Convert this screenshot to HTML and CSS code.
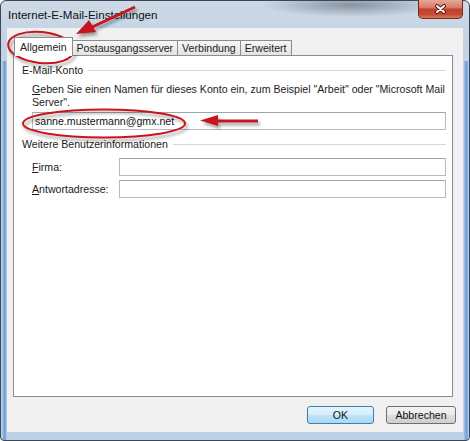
FILE: index.html
```html
<!DOCTYPE html>
<html lang="de">
<head>
    <meta charset="UTF-8">
    <meta name="viewport" content="width=device-width, initial-scale=1.0">
    <title>Internet-E-Mail-Einstellungen</title>
    <link rel="stylesheet" href="styles.css">
</head>
<body>
    <div class="window">
        <div class="titlebar">
            <span class="title">Internet-E-Mail-Einstellungen</span>
            <button class="close-btn" title="Schließen">
                <svg width="11" height="10" viewBox="0 0 11 10">
                    <path class="x-shade" d="M2 2 L9 8 M9 2 L2 8"/>
                    <path class="x-face" d="M2 2 L9 8 M9 2 L2 8"/>
                </svg>
            </button>
        </div>

        <div class="client">
            <div class="tabs">
                <div class="tab active">Allgemein</div>
                <div class="tab">Postausgangsserver</div>
                <div class="tab">Verbindung</div>
                <div class="tab">Erweitert</div>
            </div>

            <div class="panel">
                <div class="group-head">E-Mail-Konto</div>
                <p class="hint key">Geben Sie einen Namen für dieses Konto ein, zum Beispiel "Arbeit" oder "Microsoft Mail Server".</p>
                <input class="textbox account-name" type="text" value="sanne.mustermann@gmx.net">

                <div class="group-head group-gap">Weitere Benutzerinformationen</div>
                <div class="field first">
                    <label class="key">Firma:</label>
                    <input class="textbox" type="text">
                </div>
                <div class="field">
                    <label class="key">Antwortadresse:</label>
                    <input class="textbox" type="text">
                </div>
            </div>

            <div class="actions">
                <button class="btn btn-ok">OK</button>
                <button class="btn">Abbrechen</button>
            </div>
        </div>

        <!-- red markers drawn on top of the dialog -->
        <svg class="marks" width="470" height="441" viewBox="0 0 470 441">
            <g class="marks-ink">
                <ellipse cx="41" cy="47.5" rx="33" ry="15.5" transform="rotate(6 41 47.5)"/>
                <path d="M135 7 L90 28"/>
                <polygon points="76,34 96,32 89,20"/>
                <ellipse cx="104" cy="123.5" rx="81" ry="14"/>
                <path d="M258 121 L212 121"/>
                <polygon points="200,120.5 218,115 218,126"/>
            </g>
        </svg>
    </div>
</body>
</html>
```

FILE: styles.css
```css
* {
    box-sizing: border-box;
}

body {
    margin: 0;
    background: #fff;
    font-family: "Liberation Sans", Arial, sans-serif;
    font-size: 10.6px;
    color: #1b1b1b;
}

/* access key: first letter underlined */
.key::first-letter {
    text-decoration: underline;
}

/* window frame */
.window {
    position: relative;
    width: 470px;
    height: 441px;
    border: 1px solid #3d4855;
    border-radius: 6px 6px 4px 4px;
    padding: 0 6px 8px;
    display: flex;
    flex-direction: column;
    background:
        linear-gradient(to right, #c5d5e8 0, #9dbde4 2px, #6f9fd9 3px, #86addf 5px, #d2dfee 6px) left bottom / 6px calc(100% - 60px) no-repeat,
        linear-gradient(to left, #c5d5e8 0, #9dbde4 1px, #6f9fd9 2px, #86addf 4px, #d2dfee 6px) right bottom / 6px calc(100% - 60px) no-repeat,
        radial-gradient(ellipse 90px 12px at 350px 4px, rgba(70, 78, 92, 0.5), rgba(70, 78, 92, 0) 100%),
        linear-gradient(#cdd9e6, #c3d3e5 40px, #bcd0e6);
}

.titlebar {
    height: 27px;
    display: flex;
    justify-content: space-between;
    align-items: flex-start;
}

.title {
    padding: 7px 0 0 1px;
    font-size: 11.6px;
    line-height: 13px;
    color: #111;
}

.close-btn {
    width: 45px;
    height: 19px;
    margin-top: -1px;
    padding: 0;
    border: 1px solid #6e2a20;
    border-top: none;
    border-radius: 0 0 5px 5px;
    background: linear-gradient(#e7a797, #d7806d 40%, #c2402e 52%, #c54a35 80%, #dc7a5e);
    display: flex;
    align-items: center;
    justify-content: center;
}

.x-shade {
    stroke: #5b1d14;
    stroke-width: 4;
    stroke-linecap: round;
    fill: none;
}

.x-face {
    stroke: #fff;
    stroke-width: 2;
    stroke-linecap: round;
    fill: none;
}

/* client area */
.client {
    flex: 1;
    background: #f0f0f0;
    display: flex;
    flex-direction: column;
    padding: 9px 7px 8px 6px;
}

.tabs {
    display: flex;
    align-items: flex-end;
    height: 18px;
    padding-left: 2px;
    position: relative;
    z-index: 1;
}

.tab {
    height: 15px;
    padding: 0 4px;
    margin-left: -1px;
    border: 1px solid #898c95;
    border-bottom: none;
    background: linear-gradient(#f7f7f7, #ececec 50%, #e3e3e3);
    line-height: 14px;
    color: #222;
}

.tab.active {
    height: 19px;
    margin-bottom: -1px;
    padding: 0 5px;
    background: #fff;
    line-height: 18px;
}

.panel {
    flex: 1;
    margin-right: 3px;
    padding: 0 6px 0 8px;
    background: #fff;
    border: 1px solid #898c95;
}

.group-head {
    display: flex;
    align-items: center;
    gap: 5px;
    height: 13px;
    margin-top: 8px;
    line-height: 13px;
}

.group-head::after {
    content: "";
    flex: 1;
    border-top: 1px solid #d5d5d5;
}

.group-gap {
    margin-top: 8px;
}

.hint {
    margin: 6px 0 0;
    padding-left: 10px;
    line-height: 13px;
}

.textbox {
    display: block;
    height: 18px;
    padding: 0 2px;
    border: 1px solid #b6b9c0;
    border-top-color: #9fa3ab;
    font: inherit;
    color: #111;
    background: #fff;
}

.account-name {
    width: calc(100% - 10px);
    margin: 3px 0 0 10px;
}

.field {
    display: flex;
    align-items: center;
    margin-top: 4px;
    padding-left: 10px;
}

.field.first {
    margin-top: 7px;
}

.field label {
    width: 87px;
}

.field .textbox {
    flex: 1;
}

/* dialog buttons */
.actions {
    display: flex;
    justify-content: flex-end;
    gap: 12px;
    margin-top: 9px;
}

.btn {
    width: 70px;
    height: 18px;
    padding: 0;
    border: 1px solid #707070;
    border-radius: 3px;
    background: linear-gradient(#f2f2f2, #ebebeb 50%, #dddddd 51%, #cfcfcf);
    font: inherit;
    color: #111;
}

.btn-ok {
    width: 67px;
    border-color: #3c7fb1;
    background: linear-gradient(#e5f4fc, #d5eefb 50%, #bde4f9 51%, #a9d9f3);
}

/* annotation layer */
.marks {
    position: absolute;
    left: -1px;
    top: -1px;
    pointer-events: none;
}

.marks-ink {
    filter: drop-shadow(2px 3px 1.5px rgba(0, 0, 0, 0.35));
}

.marks-ink ellipse,
.marks-ink path {
    fill: none;
    stroke: #c9141d;
    stroke-width: 2;
}

.marks-ink path {
    stroke-width: 3;
}

.marks-ink polygon {
    fill: #c9141d;
}
```
